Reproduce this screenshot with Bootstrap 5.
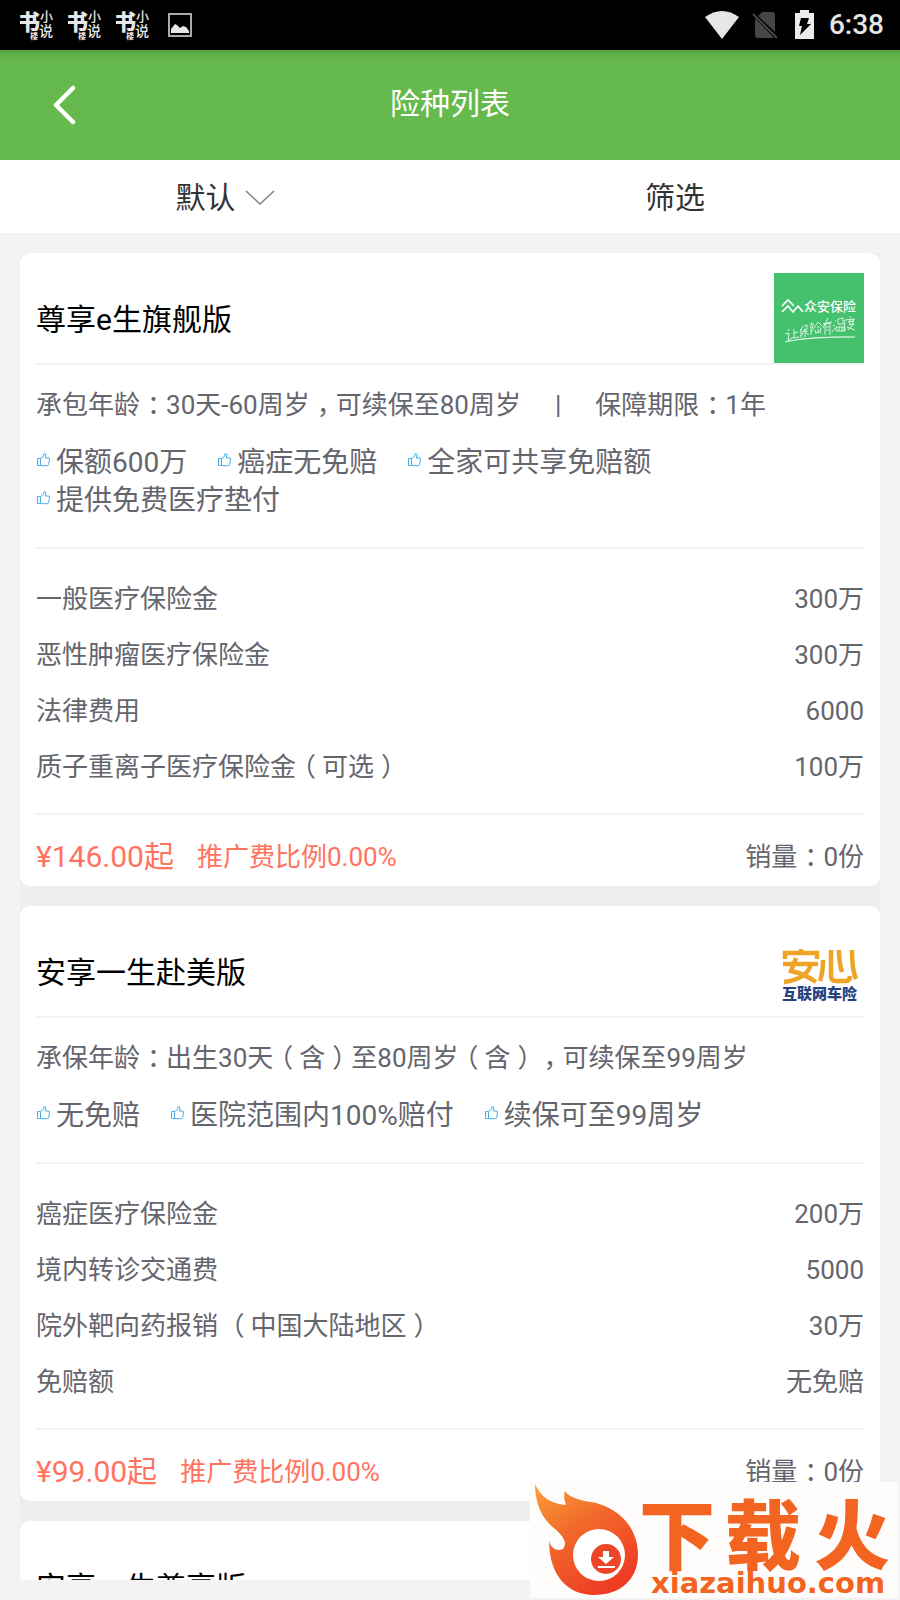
<!DOCTYPE html>
<html lang="zh-CN">
<head>
<meta charset="utf-8">
<meta name="viewport" content="width=device-width, initial-scale=1">
<title>险种列表</title>
<link href="https://cdn.jsdelivr.net/npm/bootstrap@5.3.0/dist/css/bootstrap.min.css" rel="stylesheet">
<style>
  body { font-family: Roboto, "Noto Sans CJK SC", sans-serif; background: #f3f3f3; color: #65656d; font-size: 26px; line-height: 38px; }
  /* full-width punctuation: half-width form, centred in its cell by padding */
  .cm { font-feature-settings: "halt"; padding: 0 6px 0 7px; }
  .statusbar { background: #000; height: 50px; padding: 0 16px 0 20px; color: #e6e6e6; }
  .notices { gap: 14px; }
  .nosim { margin: 0 14px 0 10px; }
  .clock { font-size: 28px; font-weight: 500; margin-left: 14px; }
  .topbar { background: linear-gradient(#57a03f, #63b44a 6px, #66b94d 16px); height: 110px; }
  .topbar h1 { font-size: 30px; line-height: 38px; color: #fff; padding-bottom: 2px; }
  .back { left: 46px; }
  .filterbar { height: 73px; background: #fff; }
  .filterbar .btn { font-size: 30px; line-height: 38px; color: #333; font-weight: 400; padding: 2px 0 0; gap: 9px; }
  .scroller { padding: 20px 20px 0; min-height: 0; }
  .deck { background: #eee; gap: 20px; }
  .plan { border: 0; border-radius: 10px; padding: 20px 16px 8px; color: inherit; }
  .plan-head { height: 92px; border-bottom: 2px solid #f3f3f3; }
  .plan-head h2 { font-size: 30px; line-height: 38px; color: #000; padding-top: 3px; }
  .plan-info { padding: 21px 0 27px; border-bottom: 2px solid #f3f3f3; }
  .plan-meta { gap: 34px; height: 38px; }
  .plan-tags { font-size: 28px; column-gap: 30px; margin-top: 20px; }
  .plan-tags li { height: 38px; gap: 6px; }
  .plan-tags svg { margin-bottom: 6px; }
  .cover { border-bottom: 2px solid #f3f3f3; padding: 22px 0 18px; }
  .cover table { line-height: 56px; }
  .cover td { padding: 0; height: 56px; }
  .plan-foot { margin-top: 21px; height: 42px; line-height: 42px; color: #ff7360; gap: 23px; }
  .price { font-size: 30px; }
  .sales { color: #65656d; }
  .bottom-gap { height: 20px; background: #f3f3f3; }
  .site-logo { right: 2px; bottom: 2px; width: 368px; height: 116px; background: #fefdfc; }
</style>
</head>
<body>
<svg class="d-none" aria-hidden="true">
  <symbol id="thumb" viewBox="0 0 14 14"><path d="M1.500 5.500h3v7h-3zM4.500 5.800 7.300 3.600 8 .8h1.300l.7 1.200-.6 3h3.600l.5 1-.8 5.600-.8 1.100H6l-1.500-.7" fill="none" stroke="#45aee8"/></symbol>
  <symbol id="novel" viewBox="0 0 34 36">
    <text x="-2" y="23" font-size="22" font-weight="900">书</text>
    <text x="20" y="14" font-size="13" font-weight="500">小</text>
    <text x="19" y="29" font-size="14" font-weight="500">说</text>
    <text x="10" y="32" font-size="8" font-weight="700">楼</text>
  </symbol>
</svg>

<div class="vh-100 d-flex flex-column overflow-hidden">
  <div class="statusbar d-flex align-items-center justify-content-between flex-shrink-0">
    <div class="notices d-flex align-items-center">
      <svg width="34" height="36" fill="#e6e6e6"><use href="#novel"/></svg>
      <svg width="34" height="36" fill="#e6e6e6"><use href="#novel"/></svg>
      <svg width="34" height="36" fill="#e6e6e6"><use href="#novel"/></svg>
      <svg class="ms-1" width="26" height="26" viewBox="0 0 26 26"><path d="M1 2h22v22H1z" fill="none" stroke="#aaa" stroke-width="2"/><path d="M3 21v-4l4-5 2 1 3 3 3-2 3 1 3 4v2z" fill="#e6e6e6"/></svg>
    </div>
    <div class="d-flex align-items-center">
      <svg width="34" height="28" viewBox="0 0 34 28"><path d="M0 6Q17-6 34 6L17 28z" fill="#e6e6e6"/></svg>
      <svg class="nosim" width="32" height="30" viewBox="0 0 32 30"><path d="M13 2h10q3 0 3 3v17L9 6zM6 8l19 20H9q-3 0-3-3z" fill="#464646"/><path d="m4 4 24 24" stroke="#464646" stroke-width="2"/></svg>
      <svg width="20" height="30" viewBox="0 0 20 30"><path d="M5 0h9v3h5v26H0V3h5z" fill="#ececec"/><path d="M6 8h8l-2 6h4L5 25l2-9H4z" fill="#000"/></svg>
      <span class="clock">6:38</span>
    </div>
  </div>

  <header class="topbar position-relative d-flex align-items-center justify-content-center flex-shrink-0">
    <button type="button" class="btn back position-absolute p-0 border-0" aria-label="返回">
      <svg width="38" height="40" viewBox="0 0 38 40"><path d="M27 3 10 20l17 17" fill="none" stroke="#fff" stroke-width="4.500" stroke-linecap="round" stroke-linejoin="round"/></svg>
    </button>
    <h1 class="m-0 fw-normal">险种列表</h1>
  </header>

  <nav class="filterbar d-flex flex-shrink-0">
    <button type="button" class="btn border-0 rounded-0 w-50 d-flex align-items-center justify-content-center">默认
      <svg width="30" height="18" viewBox="0 0 30 18"><path d="m1 2 14 13L29 2" fill="none" stroke="#808080" stroke-width="1.500"/></svg>
    </button>
    <button type="button" class="btn border-0 rounded-0 w-50">筛选</button>
  </nav>

  <main class="scroller flex-grow-1 overflow-hidden">
    <div class="deck d-flex flex-column">
      <article class="card plan">
        <div class="plan-head d-flex justify-content-between align-items-center">
          <h2 class="m-0 fw-normal">尊享e生旗舰版</h2>
          <svg width="90" height="90" viewBox="0 0 90 90" role="img" aria-label="众安保险">
            <path d="M0 0h90v90H0z" fill="#43c16d"/>
            <path d="m8 33 6-6 6 6M8 39l6-6 5 6 5-6 5 6" fill="none" stroke="#fff" stroke-width="1.600"/>
            <text x="30" y="38" font-size="13" font-weight="500" fill="#fff">众安保险</text>
            <path transform="translate(0 2)" d="m14 54 1 2m-4 3 4-1-1 8 4-3m2-9v8m0-4 4-1m-6 6 7-1m4-11-3 5m1-2v9m3-12 3-1v4l-4 1m-1 2 6-1m-3-2v8m-2-4-2 3m5-3 3 2m2-12v12m0-12q4 0 1 4 3 2-1 5m7-10-4 6m4-6 4 4m-5 1h3m-5 3 1 3m2-4v3m3-4-1 4m-5 1 6-1m2-8 9-2m-4-4-5 10m2-4v11m0-11 5-1v12m-4-8h3m-3 3h3m6-10 1 1m-3 4 2 1m-3 6 3-4m3-9 5-1v6h-5zm-2 8h9v4h-9zm3 0v4m3-4v4m8-15 1 2m-6 2 10-1m-10 1-1 11m4-9 6-1m-4-1v5m3-6v5m-4 1 5-1-6 6m-1-3 8 3" fill="none" stroke="#fff" stroke-width=".8"/>
            <path d="M11 69q23-6 70-5-48 0-70 5z" fill="#fff" stroke="#fff" stroke-width=".5"/>
          </svg>
        </div>
        <div class="plan-info">
          <div class="plan-meta d-flex"><span>承包年龄<span class="cm">：</span>30天-60周岁<span class="cm">，</span>可续保至80周岁</span><span>|</span><span>保障期限<span class="cm">：</span>1年</span></div>
          <ul class="plan-tags list-unstyled mb-0 d-flex flex-wrap">
            <li class="d-flex align-items-center"><svg width="14" height="14"><use href="#thumb"/></svg>保额600万</li>
            <li class="d-flex align-items-center"><svg width="14" height="14"><use href="#thumb"/></svg>癌症无免赔</li>
            <li class="d-flex align-items-center"><svg width="14" height="14"><use href="#thumb"/></svg>全家可共享免赔额</li>
            <li class="d-flex align-items-center"><svg width="14" height="14"><use href="#thumb"/></svg>提供免费医疗垫付</li>
          </ul>
        </div>
        <div class="cover">
          <table class="w-100">
            <tr><td>一般医疗保险金</td><td class="text-end">300万</td></tr>
            <tr><td>恶性肿瘤医疗保险金</td><td class="text-end">300万</td></tr>
            <tr><td>法律费用</td><td class="text-end">6000</td></tr>
            <tr><td>质子重离子医疗保险金<span class="cm">（</span>可选<span class="cm">）</span></td><td class="text-end">100万</td></tr>
          </table>
        </div>
        <div class="plan-foot d-flex align-items-center">
          <span class="price">¥146.00起</span><span>推广费比例0.00%</span><span class="sales ms-auto">销量<span class="cm">：</span>0份</span>
        </div>
      </article>

      <article class="card plan">
        <div class="plan-head d-flex justify-content-between align-items-center">
          <h2 class="m-0 fw-normal">安享一生赴美版</h2>
          <svg width="90" height="90" viewBox="0 0 90 90" role="img" aria-label="安心互联网车险">
            <g fill="none" stroke="#eda427" stroke-width="4.500">
              <path d="M11 33v-6h32v6M27 23v4M9 38h35M22 32l-5 13q14 3 25 11M37 38q-4 15-27 18"/>
              <path d="M49 34q0 12-3 21M57 24v26q0 5 5 5h10q4 0 4-5M65 24q0 13 3 22M78 24q0 20 4 29"/>
            </g>
            <text x="8" y="73" font-size="15" font-weight="900" fill="#28427f">互联网车险</text>
          </svg>
        </div>
        <div class="plan-info">
          <div class="plan-meta">承保年龄<span class="cm">：</span>出生30天<span class="cm">（</span>含<span class="cm">）</span>至80周岁<span class="cm">（</span>含<span class="cm">）</span><span class="cm">，</span>可续保至99周岁</div>
          <ul class="plan-tags list-unstyled mb-0 d-flex flex-wrap">
            <li class="d-flex align-items-center"><svg width="14" height="14"><use href="#thumb"/></svg>无免赔</li>
            <li class="d-flex align-items-center"><svg width="14" height="14"><use href="#thumb"/></svg>医院范围内100%赔付</li>
            <li class="d-flex align-items-center"><svg width="14" height="14"><use href="#thumb"/></svg>续保可至99周岁</li>
          </ul>
        </div>
        <div class="cover">
          <table class="w-100">
            <tr><td>癌症医疗保险金</td><td class="text-end">200万</td></tr>
            <tr><td>境内转诊交通费</td><td class="text-end">5000</td></tr>
            <tr><td>院外靶向药报销 <span class="cm">（</span>中国大陆地区<span class="cm">）</span></td><td class="text-end">30万</td></tr>
            <tr><td>免赔额</td><td class="text-end">无免赔</td></tr>
          </table>
        </div>
        <div class="plan-foot d-flex align-items-center">
          <span class="price">¥99.00起</span><span>推广费比例0.00%</span><span class="sales ms-auto">销量<span class="cm">：</span>0份</span>
        </div>
      </article>

      <article class="card plan">
        <div class="plan-head d-flex justify-content-between align-items-center">
          <h2 class="m-0 fw-normal">安享一生尊享版</h2>
        </div>
      </article>
    </div>
  </main>
  <div class="bottom-gap flex-shrink-0"></div>
</div>

<svg class="site-logo position-fixed" viewBox="0 0 368 116" role="img" aria-label="下载火 xiazaihuo.com">
  <defs><linearGradient id="flame" x1="0" y1="0" x2=".6" y2="1"><stop offset="0" stop-color="#fba13a"/><stop offset=".45" stop-color="#f26a2b"/><stop offset="1" stop-color="#ee3d24"/></linearGradient></defs>
  <path d="M5 2Q13 21 36 23 33 15 35 9 40 17 61 20C88 25 108 45 108 72 108 98 90 113 64 113 38 113 19 94 19 58 20 66 27 70 33 67 38 61 33 54 25 47 12 37 5 22 5 2Z" fill="url(#flame)"/>
  <circle cx="69" cy="73" r="26" fill="#fff"/>
  <circle cx="76" cy="77" r="15" fill="#ed4527"/>
  <path d="M73 69h6v6h5l-8 7-8-7h5zM68 84h17v2H68z" fill="#fff"/>
  <g font-size="76" font-weight="900" fill="#f36421"><text x="109" y="82">下</text><text x="195" y="82">载</text><text x="284" y="82">火</text></g>
  <text x="121" y="111" font-size="29" font-weight="700" font-family="DejaVu Sans" fill="#f36421">xiazaihuo.com</text>
</svg>
<script src="https://cdn.jsdelivr.net/npm/bootstrap@5.3.0/dist/js/bootstrap.bundle.min.js"></script>
</body>
</html>
